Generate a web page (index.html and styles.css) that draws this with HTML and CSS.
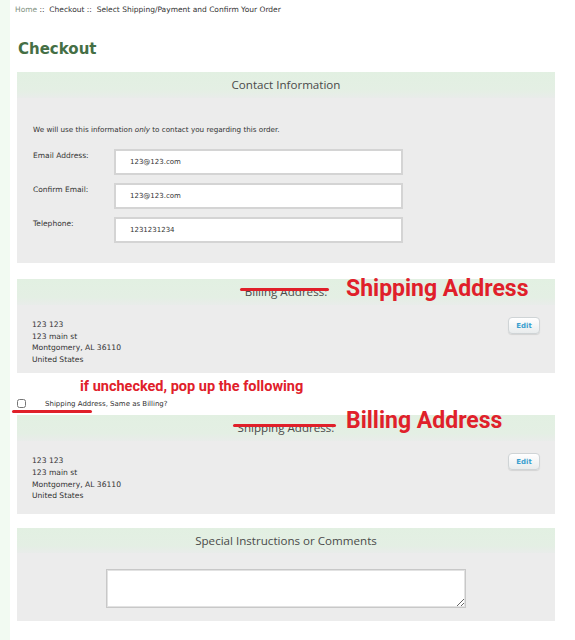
FILE: index.html
```html
<!DOCTYPE html>
<html lang="en">
<head>
    <meta charset="UTF-8">
    <title>Checkout</title>
    <link rel="stylesheet" href="styles.css">
</head>
<body>
    <div class="page">
        <div class="crumbs"><a href="#">Home</a> ::&nbsp; Checkout ::&nbsp; Select Shipping/Payment and Confirm Your Order</div>
        <h1>Checkout</h1>

        <fieldset class="panel contact">
            <div class="legend">Contact Information</div>
            <div class="panel-body">
                <p class="info">We will use this information <em>only</em> to contact you regarding this order.</p>
                <div class="field">
                    <label for="email">Email Address:</label>
                    <input type="text" id="email" value="123@123.com">
                </div>
                <div class="field">
                    <label for="email2">Confirm Email:</label>
                    <input type="text" id="email2" value="123@123.com">
                </div>
                <div class="field">
                    <label for="phone">Telephone:</label>
                    <input type="text" id="phone" value="1231231234">
                </div>
            </div>
        </fieldset>

        <fieldset class="panel address">
            <div class="legend"><span class="struck">Billing Address:</span><span class="note big">Shipping Address</span></div>
            <div class="panel-body">
                <div class="addr">123 123<br>123 main st<br>Montgomery, AL 36110<br>United States</div>
                <button class="edit">Edit</button>
            </div>
        </fieldset>

        <div class="same">
            <span class="note small">if unchecked, pop up the following</span>
            <div class="same-row"><input type="checkbox" id="same"> <span class="same-text">Shipping Address, Same as Billing?</span></div>
            <span class="underline"></span>
        </div>

        <fieldset class="panel address second">
            <div class="legend"><span class="struck">Shipping Address:</span><span class="note big">Billing Address</span></div>
            <div class="panel-body">
                <div class="addr">123 123<br>123 main st<br>Montgomery, AL 36110<br>United States</div>
                <button class="edit">Edit</button>
            </div>
        </fieldset>

        <fieldset class="panel comments">
            <div class="legend">Special Instructions or Comments</div>
            <div class="panel-body">
                <textarea></textarea>
            </div>
        </fieldset>
    </div>
</body>
</html>
```

FILE: styles.css
```css
body {
    margin: 0;
    background: #f2faf2;
    font-family: "DejaVu Sans", Verdana, sans-serif;
    color: #333;
}
.page {
    margin-left: 10px;
    background: #fff;
    min-height: 640px;
    padding: 5px 10px 0 5px;
}
.crumbs {
    font-size: 7.5px;
    line-height: 10px;
    color: #333;
}
.crumbs a {
    color: #7f927f;
    text-decoration: none;
}
h1 {
    margin: 24px 0 0 3px;
    font-size: 15px;
    line-height: 20px;
    color: #456f45;
}
.panel {
    position: relative;
    margin: 13px 0 0 2px;
    padding: 0;
    border: none;
    background: #ececec;
    width: 538px;
}
.legend {
    height: 26px;
    line-height: 26px;
    text-align: center;
    font-family: "Open Sans", sans-serif;
    font-size: 11.6px;
    color: #4a4a4a;
    background: linear-gradient(to bottom, #e2f0e2, #e4efe4 70%, #e9ecea);
}
.struck {
    position: relative;
}
.struck::after {
    content: "";
    position: absolute;
    left: -5px;
    right: -2px;
    top: 50%;
    margin-top: -4px;
    height: 3px;
    border-radius: 2px;
    background: #e0202a;
}
.note {
    position: absolute;
    color: #e0202a;
    font-family: Roboto, sans-serif;
    font-weight: bold;
    white-space: nowrap;
}
.note.big {
    left: 329px;
    top: -3px;
    font-size: 23px;
    line-height: 26px;
}
.second .note.big {
    top: -7px;
}
.panel-body {
    padding: 27px 16px 20px;
}
.info {
    margin: 0 0 14px;
    font-size: 7.2px;
    line-height: 10px;
}
.field {
    display: flex;
    margin-bottom: 8px;
}
.field:last-child {
    margin-bottom: 0;
}
.field label {
    width: 81px;
    padding-top: 2px;
    font-size: 7.5px;
    line-height: 10px;
}
.field input {
    width: 289px;
    height: 26px;
    box-sizing: border-box;
    border: 2px solid #d4d4d4;
    padding: 0 14px;
    font-family: "DejaVu Sans", sans-serif;
    font-size: 7px;
    color: #333;
}
.address {
    margin-top: 16px;
}
.address .panel-body {
    display: flex;
    justify-content: space-between;
    align-items: flex-start;
    padding: 14px 15px 8px;
}
.address.second .panel-body {
    padding-bottom: 12px;
}
.addr {
    font-size: 7.6px;
    line-height: 11.6px;
}
.edit {
    width: 32px;
    height: 17px;
    margin-top: -2px;
    padding: 0;
    border: 1px solid #cfd4d6;
    border-radius: 4px;
    background: linear-gradient(to bottom, #fff, #e9eced);
    box-shadow: 0 1px 1px rgba(0, 0, 0, 0.1);
    font-family: "DejaVu Sans", sans-serif;
    font-size: 7px;
    font-weight: bold;
    color: #3a9fcf;
}
.same {
    position: relative;
    height: 42px;
}
.note.small {
    left: 65px;
    top: 5px;
    font-size: 14.5px;
    line-height: 18px;
}
.same-row {
    position: absolute;
    left: 2px;
    top: 26px;
    display: flex;
    align-items: center;
}
.same-row input {
    width: 9px;
    height: 9px;
    margin: 0 19px 0 0;
}
.same-text {
    font-size: 7px;
    color: #333;
}
.underline {
    position: absolute;
    left: -3px;
    top: 37px;
    width: 80px;
    height: 3px;
    border-radius: 2px;
    background: #e0202a;
}
.address.second {
    margin-top: 0;
}
.comments {
    margin-top: 14px;
}
.comments .legend {
    height: 25px;
    line-height: 25px;
}
.comments .panel-body {
    padding: 16px 0 13px;
    text-align: center;
}
textarea {
    display: block;
    margin: 0 auto;
    width: 360px;
    height: 39px;
    box-sizing: border-box;
    border: 1px solid #c8c8c8;
    box-shadow: inset 0 0 0 1px #e2e2e2;
}
```
